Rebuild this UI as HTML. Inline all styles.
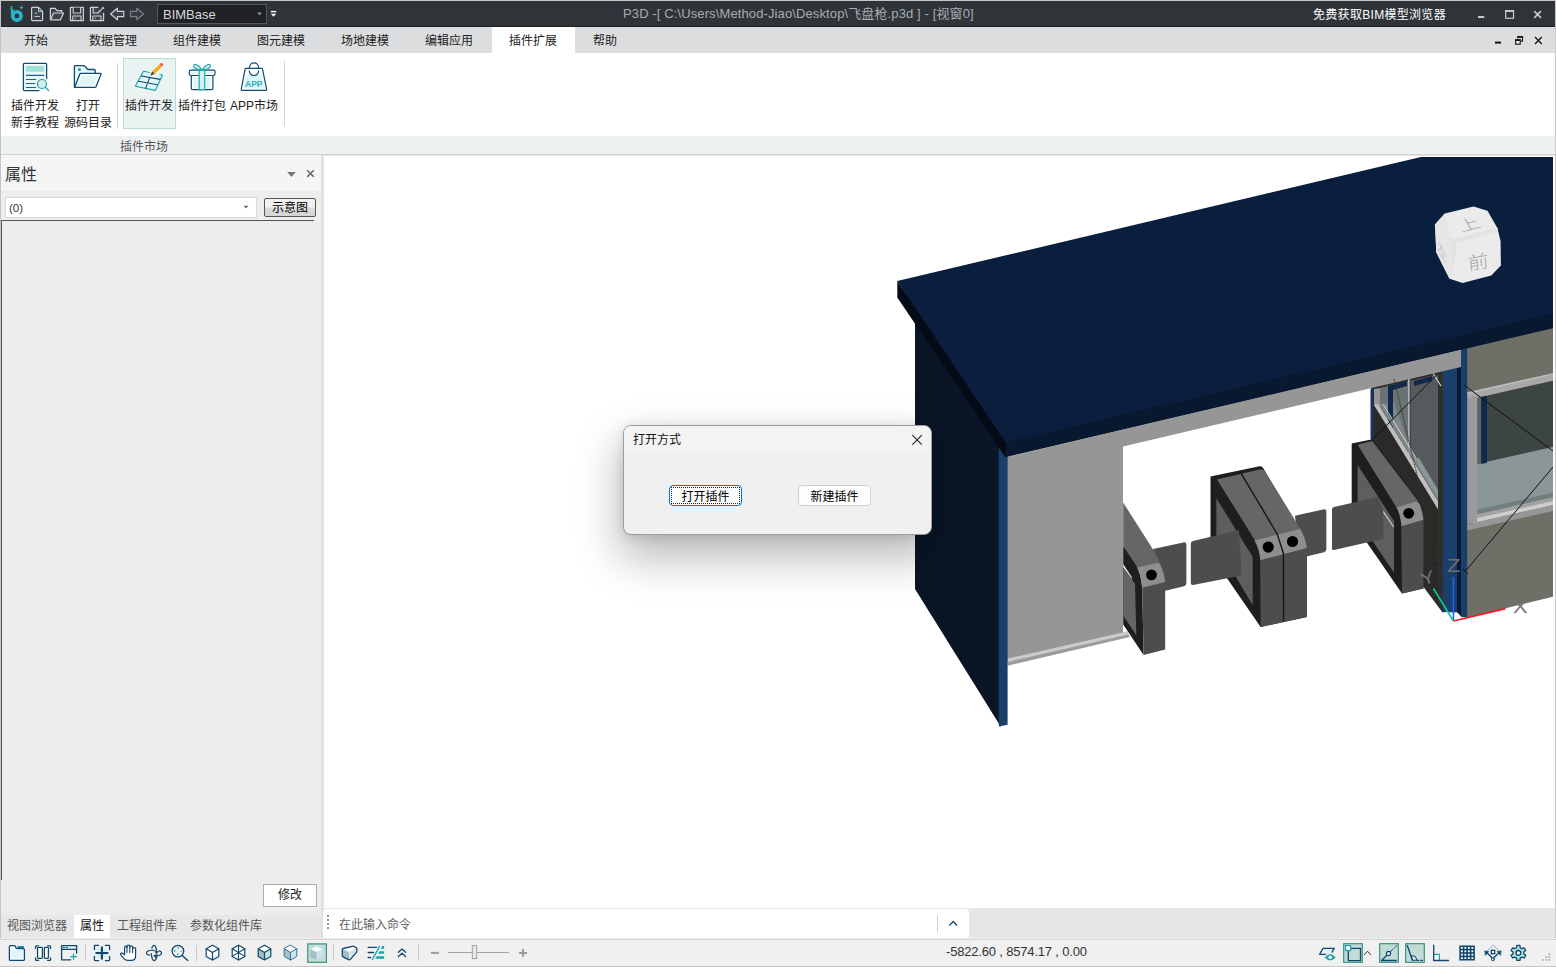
<!DOCTYPE html>
<html lang="zh-CN">
<head>
<meta charset="utf-8">
<title>P3D</title>
<style>
*{box-sizing:border-box;margin:0;padding:0}
html,body{width:1556px;height:967px;overflow:hidden;background:#e6e6e6}
body{font-family:"Liberation Sans","Noto Sans CJK SC",sans-serif;font-size:12px;color:#333;position:relative}
.abs{position:absolute}
svg{position:absolute;overflow:visible}
/* title bar */
#titlebar{left:0;top:0;width:1556px;height:27px;background:#2f3439;border-top:1px solid #c6c6c6;border-bottom:1px solid #1f2327}
#title{left:623px;top:6px;color:#a9acb0;font-size:13px;line-height:16px;letter-spacing:.115px;white-space:nowrap}
#bimtxt{left:1313px;top:7px;color:#fff;font-size:12px;line-height:16px;white-space:nowrap;letter-spacing:.3px}
#combo{left:157px;top:4px;width:110px;height:20px;background:#1f2124;border:1px solid #55595e;color:#d8dade;font-size:13px;line-height:20px;padding-left:5px}
/* tab bar */
#tabbar{left:0;top:27px;width:1556px;height:26px;background:#dcdddf}
.tab{position:absolute;top:0;height:26px;line-height:27px;font-size:12px;color:#222;white-space:nowrap}
#tabactive{left:492px;top:27px;width:83px;height:26px;background:#fff}
/* ribbon */
#ribbon{left:0;top:53px;width:1556px;height:83px;background:#fff}
#grpbar{left:0;top:136px;width:1556px;height:19px;background:#eef1f2;border-bottom:1px solid #cfd1d2}
.rlabel{position:absolute;font-size:12px;line-height:17px;color:#222;text-align:center;white-space:nowrap}
.vsep{position:absolute;width:1px;background:#d4d4d4}
/* left panel */
#lpanel{left:0;top:155px;width:321px;height:783px;background:#ededed}
#lhead{left:0;top:155px;width:321px;height:36px;background:#f5f5f5}
#viewport{left:324px;top:157px;width:1229px;height:751px;background:#fff;overflow:hidden}
#cmdbar{left:323px;top:909px;width:646px;height:29.6px;background:#fff;border-radius:3.5px}
#status{left:0;top:938px;width:1556px;height:29px;background:#f0f0f0;border-top:1px solid #ededed;border-bottom:1px solid #c6c6c6;box-shadow:inset 0 1px 0 #d4d4d4}
.btab{position:absolute;top:915px;height:23px;line-height:22px;font-size:12px;color:#555;white-space:nowrap}
</style>
</head>
<body>
<!-- TITLE BAR -->
<div id="titlebar" class="abs"></div>
<div id="combo" class="abs">BIMBase</div>
<div id="title" class="abs">P3D -[ C:\Users\Method-Jiao\Desktop\飞盘枪.p3d ] - [视窗0]</div>
<div id="bimtxt" class="abs">免费获取BIM模型浏览器</div>

<!-- TAB BAR -->
<div id="tabbar" class="abs"></div>
<div id="tabactive" class="abs"></div>
<div class="tab" style="left:24px;top:28px">开始</div>
<div class="tab" style="left:89px;top:28px">数据管理</div>
<div class="tab" style="left:173px;top:28px">组件建模</div>
<div class="tab" style="left:257px;top:28px">图元建模</div>
<div class="tab" style="left:341px;top:28px">场地建模</div>
<div class="tab" style="left:425px;top:28px">编辑应用</div>
<div class="tab" style="left:509px;top:28px">插件扩展</div>
<div class="tab" style="left:593px;top:28px">帮助</div>

<!-- RIBBON -->
<div id="ribbon" class="abs"></div>
<div id="grpbar" class="abs"></div>
<div class="abs" style="left:123px;top:58px;width:53px;height:71px;background:#eaf3f2;border:1px solid #b9dcd6"></div>
<div class="vsep" style="left:117px;top:63px;height:65.5px"></div>
<div class="vsep" style="left:284px;top:61px;height:65px"></div>
<div class="rlabel" style="left:5px;top:98px;width:60px">插件开发<br>新手教程</div>
<div class="rlabel" style="left:58px;top:98px;width:60px">打开<br>源码目录</div>
<div class="rlabel" style="left:119px;top:98px;width:60px">插件开发</div>
<div class="rlabel" style="left:172px;top:98px;width:60px">插件打包</div>
<div class="rlabel" style="left:224px;top:98px;width:60px">APP市场</div>
<div class="rlabel" style="left:114px;top:139px;width:60px;color:#555">插件市场</div>

<!-- LEFT PANEL -->
<div id="lpanel" class="abs"></div>
<div id="lhead" class="abs"></div>
<div class="abs" style="left:5px;top:164px;font-size:16px;line-height:22px;color:#333">属性</div>
<div class="abs" style="left:5px;top:197px;width:252px;height:21px;background:#fff;border:1px solid #d9d9d9;font-size:11.5px;line-height:20px;padding-left:3px;color:#333">(0)</div>
<div class="abs" style="left:264px;top:198px;width:52px;height:19px;background:linear-gradient(#f2f2f2 0,#efefef 48%,#dcdcdc 52%,#d4d4d4 100%);border:1px solid #555;border-radius:2px;font-size:12px;line-height:19px;text-align:center;color:#000">示意图</div>
<div class="abs" style="left:1px;top:220px;width:313px;height:660px;border-top:1px solid #555;border-left:1px solid #555"></div>
<div class="abs" style="left:263px;top:884px;width:54px;height:23px;background:#fff;border:1px solid #adadad;font-size:12px;line-height:21px;text-align:center;color:#222">修改</div>
<div class="abs" style="left:0;top:915px;width:321px;height:23px;background:#e7e7e7"></div>
<div class="abs" style="left:74px;top:915px;width:36px;height:23px;background:#fff"></div>
<div class="btab" style="left:7px">视图浏览器</div>
<div class="btab" style="left:80px;color:#111">属性</div>
<div class="btab" style="left:117px">工程组件库</div>
<div class="btab" style="left:190px">参数化组件库</div>

<div class="abs" style="left:321px;top:155px;width:2.5px;height:783px;background:#e1e1e1"></div>
<!-- VIEWPORT -->
<div id="viewport" class="abs">
<!--SCENE_START--><svg width="1556" height="967" viewBox="0 0 1556 967" style="left:-324px;top:-157px" shape-rendering="geometricPrecision">
<!-- kiosk front wall (right) -->
<polygon points="1466,340 1556,318 1556,596 1466,618" fill="#6e7068"/>
<!-- window top frame -->
<polygon points="1467.0,392.6 1556.0,372.5 1556.0,380.3 1467.0,400.4" fill="#a8a8a8"/>
<polygon points="1467.0,392.6 1556.0,372.5 1556.0,373.9 1467.0,394.0" fill="#bcbcbc"/>
<polygon points="1477.0,397.9 1556.0,380.1 1556.0,446.4 1477.0,464.2" fill="#3c4444"/>
<polygon points="1477.0,464.0 1556.0,446.2 1556.0,492.3 1477.0,510.1" fill="#8b9699"/>
<polygon points="1481.0,397.0 1487.0,395.7 1487.0,462.7 1481.0,464.0" fill="#0f2a4d"/>
<polygon points="1477.0,397.9 1481.2,397.0 1481.2,463.4 1477.0,464.3" fill="#5a6468"/>
<polygon points="1477.0,509.9 1556.0,492.1 1556.0,496.7 1477.0,514.5" fill="#737e81"/>
<polygon points="1467.0,516.6 1556.0,496.5 1556.0,500.5 1467.0,520.6" fill="#a2a2a2"/>
<polygon points="1472.6,519.1 1556.0,500.3 1556.0,504.5 1472.6,523.3" fill="#cdcdcd"/>
<polygon points="1467.0,524.4 1556.0,504.3 1556.0,510.3 1467.0,530.4" fill="#969696"/>
<polygon points="1467.0,398.0 1477.2,395.7 1477.2,521.7 1467.0,524.0" fill="#9a9a9a"/>
<!-- kiosk side wall -->
<polygon points="1371,380 1443,365 1443,613 1425,589 1371,509" fill="#2a2a28"/>
<!-- side window glass -->
<polygon points="1380,388 1438,374 1438,509 1380,413" fill="#555b5c"/>
<polygon points="1380,388 1408,381 1408,458 1380,413" fill="#6a7275"/>
<polygon points="1384,404 1394,402 1407,440 1407,447" fill="#7d8689"/>
<!-- blue top pieces -->
<polygon points="1388,386 1407,381 1407,386 1393,390 1393,432 1388,424" fill="#10294a"/>
<polygon points="1414,381 1432,376 1432,381 1414,386" fill="#10294a"/>
<!-- verticals -->
<polygon points="1374,389 1380,388 1380,413 1374,405" fill="#969696"/>
<rect x="1370.5" y="389" width="3" height="50" fill="#16365e"/>
<rect x="1408" y="379" width="1.6" height="80" fill="#b0b0b0"/>
<rect x="1410" y="379" width="1.2" height="82" fill="#44494a"/>
<!-- diagonal sill -->
<polygon points="1374,405 1378,404 1439,503 1439,511" fill="#bfbfbf"/>
<polygon points="1379,404 1382,404 1439,496 1439,502" fill="#80888a"/>
<line x1="1383" y1="404" x2="1438" y2="494" stroke="#d8d8d8" stroke-width="1"/>
<polygon points="1414,458 1419,458 1438,490 1438,498" fill="#8a9598"/>
<!-- dark column -->
<polygon points="1438,370 1444,368 1444,613 1438,606" fill="#2e2e2d"/>
<line x1="1433" y1="373" x2="1441" y2="386" stroke="#d0d0d0" stroke-width="1.2"/>

<!-- blue pillar -->
<polygon points="1442.8,360 1457.5,357 1457.5,612.5 1442.8,612" fill="#1a3f6b"/>
<polygon points="1457,357 1461.5,356 1461.5,617 1457,612" fill="#0a1a33"/>
<polygon points="1461,340 1467.2,340 1467.2,617.5 1461,617" fill="#1a3f6b"/>

<!-- beam under roof -->
<polygon points="1007,457 1461,350 1461,367 1123,446.5 1007,474" fill="#969696"/>
<!-- gray wall left -->
<polygon points="1007,460 1123,440 1123,634 1007,660" fill="#969696"/>
<polygon points="1007.5,658.6 1127,631.6 1129.8,637 1007.5,665.8" fill="#9c9c9c"/>
<polygon points="1007.5,658.6 1127,631.6 1128.2,634.4 1007.5,662" fill="#cbcbcb"/>

<!-- left wall -->
<polygon points="915,300 1001,440 1001,727 915,589" fill="#0a1626"/>
<polygon points="998.8,440 1007.6,440 1007.6,724.8 998.8,726.4" fill="#1a3f6b"/>

<!-- roof -->
<polygon points="897.3,281 1556,125 1556,320 1005.6,450" fill="#0a1e3d"/>
<polygon points="1005.6,442.5 1556,313 1556,327.5 1005.6,457.2" fill="#07182f"/>
<polygon points="897.3,281 1005.6,442.5 1005.6,457.8 897.3,297.5" fill="#040b16"/>
<!-- ===== turnstile 1 ===== -->
<path d="M1153,549 L1183.5,542.4 Q1186.4,542 1186.4,545 L1186.4,583 Q1186.4,585.6 1184,586.2 L1160,592 Z" fill="#4d4d4d"/>
<polygon points="1123.2,502.6 1154,551 1160.4,563.4 1138,569 1123.2,545.8" fill="#666"/>
<path d="M1123.2,545.8 L1135,563.5 Q1141,572 1142.2,587.7 L1143.6,654.9 L1123.2,624.4 Z" fill="#1e1e1e"/>
<polygon points="1123.2,566.4 1135,584.1 1136.3,635.2 1123.2,615.6" fill="#646464"/>
<polygon points="1123.2,564 1132,577.6 1132,579 1123.2,567" fill="#ececec"/>
<path d="M1137.3,567.4 L1156,563.3 Q1159,562.5 1160.5,565 Q1164,572 1165.2,582.2 L1142.2,587.7 Q1141,575 1137.3,567.4 Z" fill="#8e8e8e"/>
<circle cx="1151.5" cy="574.9" r="5.4" fill="#000"/>
<polygon points="1142.2,587.4 1165.2,581.9 1165.2,649.4 1143.6,654.9" fill="#4d4d4d"/>

<!-- ===== middle turnstile ===== -->
<path d="M1295,515.8 L1324,509.3 Q1326.4,509 1326.4,511.5 L1326.4,549 Q1326.4,551.6 1324,552.3 L1300,558 Z" fill="#4d4d4d"/>
<path d="M1210.5,476.5 L1259.5,466.2 Q1262.5,465.8 1264,469.6 L1298.5,528 L1305.5,546.5 L1305.5,617.3 L1260.6,626.9 L1210.5,554.2 Z" fill="#1e1e1e"/>
<path d="M1217,479.5 L1259.6,469.4 Q1263,468.8 1265,471.4 L1300.6,529.2 L1301,531 L1256,542 Z" fill="#666"/>
<path d="M1254.4,540.4 L1300.2,529 Q1305.2,537 1307,548.4 L1260.4,561 Q1259.5,549 1254.4,540.4 Z" fill="#8e8e8e"/>
<polygon points="1260.2,560.2 1307,548 1307,617.1 1260.6,626.9" fill="#4d4d4d"/>
<polygon points="1216.4,498.2 1252.7,557.1 1252.7,605.3 1216.4,544.3" fill="#5e5e5e"/>
<polyline points="1240,471.6 1277.2,534 1283.4,553.2 1283.6,621.6" fill="none" stroke="#161616" stroke-width="1.4"/>
<circle cx="1268.2" cy="547.1" r="5.6" fill="#000"/>
<circle cx="1292.5" cy="541.5" r="5.6" fill="#000"/>
<path d="M1193,541 L1239,530 L1241.5,575.5 L1193,585 Q1190.8,585.3 1190.8,583 L1190.8,543.5 Q1190.8,541.5 1193,541 Z" fill="#4d4d4d"/>

<!-- ===== turnstile 3 ===== -->
<path d="M1351.7,443.4 L1372.4,439.3 L1418.2,499.8 L1423.5,520 L1423.5,588.6 L1402,593.4 L1351.7,520.5 Z" fill="#1e1e1e"/>
<polygon points="1357.6,444.8 1372.2,441 1418.4,501.4 1397.2,508.6" fill="#666"/>
<path d="M1396.5,507.5 L1414.5,502 Q1418,501 1419.5,504 Q1422.5,511 1423.5,520 L1401.5,526.5 Q1400.5,515 1396.5,507.5 Z" fill="#8e8e8e"/>
<circle cx="1408.7" cy="513.3" r="5.4" fill="#000"/>
<polygon points="1401.2,526.6 1423.5,520 1423.5,588.6 1402,593.4" fill="#4d4d4d"/>
<polygon points="1357.6,464.9 1394,521.3 1394,572.4 1357.6,519" fill="#5e5e5e"/>
<polygon points="1383.2,510.4 1393.6,526 1393.6,527.8 1383.2,512.4" fill="#d8d8d8"/>
<path d="M1334,507 L1377.8,497.1 L1383.2,510.6 L1383.2,538.8 L1334,550 Q1332,550.4 1332,548.5 L1332,509.4 Q1332,507.5 1334,507 Z" fill="#4d4d4d"/>

<!-- helper lines -->
<line x1="1371.5" y1="440.5" x2="1438" y2="373.5" stroke="#111" stroke-width="1"/>
<line x1="1394" y1="379" x2="1438.5" y2="564" stroke="#3a2f1c" stroke-width="1" stroke-dasharray="1.5,1"/>
<line x1="1434" y1="564.5" x2="1442" y2="563.5" stroke="#222" stroke-width="1"/>
<line x1="1464" y1="385" x2="1553" y2="451" stroke="#111" stroke-width="1"/>
<line x1="1553" y1="467" x2="1465.5" y2="571" stroke="#111" stroke-width="1"/>
<line x1="1463" y1="569" x2="1468" y2="574" stroke="#111" stroke-width="1"/>

<!-- axes -->
<line x1="1453.4" y1="621" x2="1453.4" y2="577" stroke="#1464ff" stroke-width="1.6"/>
<line x1="1453.4" y1="621" x2="1505.5" y2="608.6" stroke="#ff1420" stroke-width="1.6"/>
<line x1="1453.4" y1="621" x2="1433.5" y2="588.5" stroke="#10c49a" stroke-width="1.6"/>
<text transform="translate(1453.8,571.6) scale(1.25,1)" text-anchor="middle" font-family="Liberation Sans, sans-serif" font-size="17.5" fill="#707070">Z</text>
<text transform="translate(1429.4,583.5) rotate(-18) scale(1.2,1)" text-anchor="middle" font-family="Liberation Sans, sans-serif" font-size="17.5" fill="#707070">Y</text>
<text transform="translate(1520.2,613) scale(1.25,1)" text-anchor="middle" font-family="Liberation Sans, sans-serif" font-size="17.5" fill="#707070">X</text>

<!-- view cube -->
<polygon points="1473.5,206.6 1487.5,210.8 1497.5,228.3 1500.6,241.5 1500.9,265.5 1491.3,275.6 1462.6,283 1449.5,278.7 1436.3,252.3 1435,224.4 1444.8,213.6" fill="#ebebeb"/>
<polygon points="1435,224.4 1444.8,213.6 1451,238 1453.4,268 1449.5,278.7 1436.3,252.3" fill="#e6e6e6"/>
<polygon points="1451,238 1456,243 1497.5,232 1497.5,228.3 1489,230 1458,238" fill="#e3e3e3"/>
<polygon points="1451,238 1456,243 1455,262 1453.4,268" fill="#e2e2e2"/>
<text transform="matrix(0.966,-0.259,0.37,0.62,1469.2,224.6)" text-anchor="middle" dy=".36em" font-family="'Noto Sans CJK SC', sans-serif" font-weight="300" font-size="21" fill="#a6a6a6">上</text>
<text transform="matrix(0.985,-0.174,0.08,0.84,1478.1,262)" text-anchor="middle" dy=".36em" font-family="'Noto Sans CJK SC', sans-serif" font-weight="300" font-size="21" fill="#a6a6a6">前</text>
<text transform="matrix(0.47,0.70,-0.03,0.64,1442.1,252)" text-anchor="middle" dy=".36em" font-family="'Noto Sans CJK SC', sans-serif" font-weight="300" font-size="20" fill="#b0b0b0">左</text>
</svg>
<!--SCENE_END-->
</div>

<div class="abs" style="left:323px;top:156px;width:1231.5px;height:1px;background:#fff"></div>
<div class="abs" style="left:1553px;top:156px;width:1.5px;height:752px;background:#fff"></div>
<div class="abs" style="left:0;top:0;width:1px;height:967px;background:#c4c4c4"></div>
<div class="abs" style="left:1554.5px;top:0;width:1.5px;height:967px;background:#c8c8c8"></div>
<!-- COMMAND BAR -->
<div id="cmdbar" class="abs"></div>
<div class="abs" style="left:339px;top:916.5px;font-size:12px;line-height:17px;color:#626262">在此输入命令</div>
<div class="abs" style="left:937px;top:915px;width:1px;height:17px;background:#d0d0d0"></div>

<!-- STATUS BAR -->
<div id="status" class="abs"></div>
<div class="abs" style="left:946px;top:943px;font-size:13px;line-height:17px;color:#333;white-space:nowrap;letter-spacing:-.18px">-5822.60 , 8574.17 , 0.00</div>

<!--ICONS_START--><svg width="1556" height="967" viewBox="0 0 1556 967" style="left:0;top:0;pointer-events:none" fill="none">
<!-- ===== title bar icons ===== -->
<g id="logo">
<circle cx="16.9" cy="15.9" r="4.2" stroke="#2ab3c8" stroke-width="3.6"/>
<path d="M12.4,10 Q11.6,13 12.6,16.4" stroke="#2ab3c8" stroke-width="2.6" stroke-linecap="round"/>
<path d="M21.4,5.8 L21.4,9.2 M19.7,7.5 L23.1,7.5" stroke="#2ab3c8" stroke-width="1.1"/>
<path d="M10.2,6.8 L12.4,6.8 L10.4,9 L12.6,9" stroke="#2ab3c8" stroke-width=".9"/>
</g>
<g stroke="#cdd0d4" stroke-width="1.2" stroke-linejoin="round" fill="#3b444d">
<path d="M32.4,7.4 L38.6,7.4 L42.6,11.4 L42.6,19.8 Q42.6,20.6 41.8,20.6 L32.4,20.6 Q31.6,20.6 31.6,19.8 L31.6,8.2 Q31.6,7.4 32.4,7.4 Z"/>
<path d="M38.6,7.6 L38.6,11.4 L42.4,11.4" stroke-width="1" fill="none"/>
<path d="M34.7,13.2 L37.1,13.2 M34.4,16.4 L40,16.4" stroke-width="1" fill="none"/>
<path d="M50.4,19.4 L50.4,8.4 L55.2,8.4 L57,10.6 L61.8,10.6 L61.8,12.8"/>
<path d="M50.6,19.8 L53.6,13 L63.6,13 L60.4,19.8 Z"/>
<path d="M70.4,7.4 L83.4,7.4 L83.4,20.6 L70.4,20.6 Z"/>
<path d="M73.2,7.6 L73.2,13 L80.6,13 L80.6,7.6" stroke-width="1.1" fill="#2f3439"/>
<path d="M72.8,20.4 L72.8,16 L81,16 L81,20.4" stroke-width="1.1" fill="none"/>
<path d="M75.2,18.4 L76,18.4" stroke-width="1.1"/>
<path d="M98.4,7.4 L90.4,7.4 L90.4,20.6 L103.6,20.6 L103.6,12.8"/>
<path d="M93.2,7.6 L93.2,13 L98,13" stroke-width="1.1" fill="none"/>
<path d="M92.8,20.4 L92.8,16 L101,16 L101,20.4" stroke-width="1.1" fill="none"/>
<path d="M95.2,18.4 L96,18.4" stroke-width="1.1"/>
<path d="M103.4,7.6 L97.6,13.2 M102.4,7 L104,8.6" stroke-width="1.3" fill="none"/>
</g>
<path d="M110.6,14 L117.4,8.2 L117.4,11.4 L123.8,11.4 L123.8,16.6 L117.4,16.6 L117.4,19.8 Z" stroke="#cdd0d4" stroke-width="1.2" stroke-linejoin="round" fill="#3b444d"/>
<path d="M143.6,14 L136.8,8.2 L136.8,11.4 L130.4,11.4 L130.4,16.6 L136.8,16.6 L136.8,19.8 Z" stroke="#7a7f85" stroke-width="1.2" stroke-linejoin="round" fill="#363d45"/>
<path d="M257,12.6 L262,12.6 L259.5,15.6 Z" fill="#8b8f94"/>
<path d="M270.8,11.6 L276.2,11.6" stroke="#fff" stroke-width="1.4"/>
<path d="M270.8,13.8 L276.2,13.8 L273.5,16.8 Z" fill="#fff"/>
<!-- window controls -->
<path d="M1478,17 L1484.2,17" stroke="#c9cbce" stroke-width="2"/>
<rect x="1505.7" y="10.8" width="7.8" height="7.5" stroke="#c9cbce" stroke-width="1.2"/><path d="M1505.1,11 L1514.1,11" stroke="#c9cbce" stroke-width="1.8"/>
<path d="M1534.2,11.1 L1541,17.9 M1541,11.1 L1534.2,17.9" stroke="#c9cbce" stroke-width="1.5"/>
<path d="M1495,42.6 L1501,42.6" stroke="#111" stroke-width="2"/>
<path d="M1517.9,38.6 L1517.9,36.8 L1522.5,36.8 L1522.5,41.2 L1521,41.2" stroke="#111" stroke-width="1.1"/><path d="M1517.3,36.9 L1523.1,36.9" stroke="#111" stroke-width="1.7"/><rect x="1515.7" y="40" width="4.5" height="4.2" fill="#eceded" stroke="#111" stroke-width="1.1"/><path d="M1515.1,40.1 L1520.8,40.1" stroke="#111" stroke-width="1.7"/>
<path d="M1535,37 L1541.8,44 M1541.8,37 L1535,44" stroke="#111" stroke-width="1.3"/>
<!-- left panel header icons -->
<path d="M287.2,172 L295.8,172 L291.5,177 Z" fill="#777"/>
<path d="M307.2,170.2 L313.8,176.9 M313.8,170.2 L307.2,176.9" stroke="#6a6a6a" stroke-width="1.5"/>
<path d="M243.6,205.8 L248.4,205.8 L246,208.6 Z" fill="#666"/>
<!-- command bar -->
<path d="M328,915.1 v1.9 M328,919.1 v1.9 M328,923.1 v1.9 M328,927.2 v1.9" stroke="#8e8e8e" stroke-width="1.9"/>
<path d="M949.4,925.4 L953.2,921.4 L957,925.4" stroke="#1d4a75" stroke-width="1.4"/>

<!-- ===== ribbon icons ===== -->
<g stroke-linejoin="round" stroke-linecap="round">
<!-- 1: doc w/ magnifier -->
<rect x="24.6" y="64.8" width="20.8" height="24.6" fill="#e6f8f8" stroke="none"/>
<path d="M39,90.6 L24.4,90.6 Q23.4,90.6 23.4,89.6 L23.4,64.4 Q23.4,63.4 24.4,63.4 L45.6,63.4 Q46.6,63.4 46.6,64.4 L46.6,78.4" stroke="#0f4a73" stroke-width="1.3" fill="none"/>
<rect x="26.1" y="66" width="18" height="5.7" fill="#a0e0d8"/>
<path d="M26.4,75.4 L43.8,75.4 M26.4,79.5 L35.8,79.5 M26.4,83.5 L34.8,83.5 M26.4,87.5 L35.8,87.5" stroke="#1d5f8a" stroke-width="1.1"/>
<circle cx="42" cy="84" r="4.5" fill="#d3ecec" stroke="#1aa3a8" stroke-width="1.2"/>
<path d="M45.4,87.4 L48.6,90.5" stroke="#1aa3a8" stroke-width="1.3"/>
<!-- 2: folder -->
<path d="M74.4,86.8 L74.4,66.4 Q74.4,65.6 75.2,65.6 L83.6,65.6 Q84.2,65.6 84.6,66 L87.6,69.2 Q87.9,69.5 88.4,69.5 L94.2,69.5 Q95.1,69.5 95.1,70.4 L95.3,73.2" stroke="#0f4a73" stroke-width="1.3" fill="#e6f8f8"/>
<path d="M74.6,87.4 L79.9,73.9 Q80.2,73.4 80.8,73.4 L100.4,73.4 Q101.4,73.4 101,74.3 L96,86.8 Q95.7,87.4 95,87.4 Z" stroke="#0f4a73" stroke-width="1.3" fill="#fff"/>
<path d="M81.6,76 L97.6,76 L94,85.4 L78,85.4 Z" fill="#dff6f8" stroke="none"/>
<circle cx="79.5" cy="69.5" r="1.5" fill="#1aa3a8"/>
<!-- 3: grid + pencil -->
<path d="M143.5,71.2 L162.5,75 L155.3,90.4 L135.3,86.3 Z" fill="#e0f5f7" stroke="#1aa3a8" stroke-width="1.1"/>
<path d="M141.5,76 L160,79.4 M138.4,81.2 L157.4,84.8 M149.7,77.6 L145.6,88.4" stroke="#11466d" stroke-width="1.1"/>
<path d="M149.6,71 L158.6,74" stroke="#eaf3f2" stroke-width="2.4"/>
<path d="M152.2,71.6 L159.6,64.2 L162,66.6 L154.6,74 Z" fill="#f7a600" stroke="none"/>
<path d="M153.4,72.8 L160.8,65.4" stroke="#fbc44a" stroke-width=".9"/>
<path d="M159.6,64.2 L160.4,63.4 Q161.6,62.6 162.6,63.6 Q163.6,64.6 162.8,65.8 L162,66.6 Z" fill="#f04860"/>
<path d="M152.2,71.6 L150.2,75.8 L154.6,74 Z" fill="#5a3a2a"/>
<!-- 4: gift -->
<path d="M191.3,75.5 L212.9,75.5 L212.9,88.2 Q212.9,89.7 211.4,89.7 L192.8,89.7 Q191.3,89.7 191.3,88.2 Z" fill="#fff" stroke="#0f4a73" stroke-width="1.2"/>
<rect x="193.4" y="77.4" width="17.4" height="10.4" fill="#e0f5f7"/>
<rect x="189.3" y="70.2" width="25.7" height="5.3" rx="1.5" fill="#fff" stroke="#0f4a73" stroke-width="1.2"/>
<rect x="191.2" y="71.8" width="22" height="2.4" fill="#e0f5f7"/>
<rect x="199.2" y="70.2" width="5.5" height="19.5" fill="#d3f0f0" stroke="#1aa3a8" stroke-width="1.1"/>
<path d="M201.6,69.6 C198.4,64 193.6,63.2 193.6,66 C193.6,68.6 198,69.4 201.6,69.6 M202.4,69.6 C205.6,64 210.4,63.2 210.4,66 C210.4,68.6 206,69.4 202.4,69.6" stroke="#1aa3a8" stroke-width="1.1" fill="#e0f5f7"/>
<!-- 5: APP bag -->
<path d="M246.2,68.3 L261.4,68.3 Q262.3,68.3 262.5,69.2 L266.6,89.2 Q266.8,90.4 265.6,90.4 L242.3,90.4 Q241.1,90.4 241.3,89.2 L245.1,69.2 Q245.3,68.3 246.2,68.3 Z" fill="#fff" stroke="#0f4a73" stroke-width="1.2"/>
<path d="M246,75 L262,75 L264.4,88.6 L243.4,88.6 Z" fill="#e0f5f7"/>
<path d="M249.4,68.2 C249.4,61.2 258.7,61.2 258.7,68.2" stroke="#0f4a73" stroke-width="1.2" fill="none"/>
<path d="M249.2,70.9 C250,77 257.9,77 258.7,70.9" stroke="#0f4a73" stroke-width="1.1" fill="#fff"/>
</g>
<text x="245.1" y="86.8" font-family="Liberation Sans, sans-serif" font-weight="bold" font-size="9.6" fill="#2ab0b6" stroke="none" textLength="17.2" lengthAdjust="spacingAndGlyphs">APP</text>
<!-- ===== bottom toolbar icons ===== -->
<g stroke="#11466d" stroke-width="1.3" stroke-linejoin="round" stroke-linecap="round" fill="none">
<!-- 1 folder/page -->
<rect x="17.6" y="946" width="6.4" height="2.6" fill="#1aa3a8" stroke="none"/>
<path d="M10.4,945.6 L14.6,945.6 Q15.4,945.6 15.5,946.6 Q15.7,948.6 17.4,948.6 L23.2,948.6 Q24.4,948.6 24.4,949.8 L24.4,959.2 Q24.4,960.4 23.2,960.4 L10.4,960.4 Q9.4,960.4 9.4,959.2 L9.4,946.8 Q9.4,945.6 10.4,945.6 Z" fill="#fff"/>
<rect x="11.4" y="950.2" width="11.2" height="8.2" fill="#dff4f6" stroke="none"/>
<path d="M18.6,947.2 L19.6,947.2 M21.4,947.2 L22.4,947.2" stroke-width=".9"/>
<!-- 2 brackets + bars -->
<path d="M38.6,945.8 L36.4,945.8 Q35.6,945.8 35.6,946.8 L35.6,948.4 M35.6,957.8 L35.6,959.4 Q35.6,960.4 36.4,960.4 L38.6,960.4 M47.6,945.8 L49.8,945.8 Q50.6,945.8 50.6,946.8 L50.6,948.4 M50.6,957.8 L50.6,959.4 Q50.6,960.4 49.8,960.4 L47.6,960.4"/>
<rect x="37.6" y="947.4" width="4.8" height="11" rx=".8" fill="#fff"/>
<rect x="44.4" y="947.4" width="4" height="11" rx=".8" fill="#fff"/>
<path d="M38.4,948.6 L41.6,948.6 M45.2,948.6 L47.6,948.6" stroke="#dff4f6" stroke-width="1"/>
<!-- 3 window + plus -->
<rect x="62.2" y="946.2" width="14" height="2.8" fill="#dff4f6" stroke="none"/>
<path d="M70.6,959.8 L61.6,959.8 L61.6,945.6 L76.6,945.6 L76.6,953.2"/>
<path d="M61.6,949.4 L76.6,949.4" stroke-width="1.1"/>
<path d="M63.4,947.5 L64.4,947.5 M66.2,947.5 L67.4,947.5" stroke-width="1"/>
<path d="M73.5,953.4 L73.5,959.8 M70.2,956.6 L76.8,956.6" stroke="#1aa3a8" stroke-width="1.2" stroke-linecap="butt"/>
<!-- 4 [+] -->
<circle cx="101.9" cy="953" r="5.4" fill="#d2eef0" stroke="none"/>
<path d="M98.6,945.4 L95.2,945.4 Q94.4,945.4 94.4,946.2 L94.4,949.6 M94.4,956.4 L94.4,959.8 Q94.4,960.6 95.2,960.6 L98.6,960.6 M105.4,945.4 L108.8,945.4 Q109.6,945.4 109.6,946.2 L109.6,949.6 M109.6,956.4 L109.6,959.8 Q109.6,960.6 108.8,960.6 L105.4,960.6"/>
<path d="M101.9,947.4 L101.9,958.7 M96.3,953 L107.6,953" stroke-width="2.1"/>
<!-- 5 hand -->
<path d="M120.6,954.6 Q120,953.6 121.2,953.2 Q122.4,952.9 123.4,953.8 L124.6,954.9 L124.6,947.4 Q124.6,946.2 125.8,946.2 Q127,946.2 127,947.4 L127,946.4 Q127,945.2 128.4,945.2 Q129.8,945.2 129.8,946.4 L129.8,946.9 Q129.8,945.8 131.2,945.8 Q132.6,945.8 132.6,947 L132.6,948.6 Q132.6,947.6 134,947.6 Q135.6,947.6 135.6,949 L135.6,956 Q135.6,960.4 131.4,960.4 L127.6,960.4 Q125.6,960.4 124.4,959.2 Z" fill="#fff" stroke-width="1.2"/>
<path d="M127,947.4 L127,952.6 M129.8,946.8 L129.8,952.6 M132.6,948 L132.6,952.6" stroke-width="1.1"/>
<!-- 6 orbit -->
<path d="M154,950.4 C150,949.8 146.4,951 146.4,952.8 C146.4,954.2 148.2,955 149.4,955.2" stroke-width="1.2"/>
<path d="M151.2,953.6 C151.6,958 153,961 154.4,960.6 C155.6,960.2 156.4,958.6 156.6,957.4" stroke-width="1.2"/>
<path d="M154.4,955.8 C158.4,956.2 161.8,954.8 161.6,952.8 C161.4,951.6 160.2,951 159,950.8" stroke-width="1.2"/>
<path d="M156.6,952 C156.4,948 155.2,945 153.8,945.4 C152.6,945.8 152,947 151.8,948.2" stroke-width="1.2"/>
<path d="M155.2,951 L158.4,951.6 L156.4,953.8 Z M157.2,954.6 L153.6,955.8 L156.2,958 Z" fill="#11466d" stroke-width=".6"/>
<!-- 7 zoom -->
<circle cx="177.9" cy="951.1" r="5.8" stroke-width="1.3"/>
<circle cx="177.9" cy="951.1" r="3.2" stroke="#1aa3a8" stroke-width="1.4" stroke-dasharray="1.6,3.43" stroke-dashoffset=".8" stroke-linecap="butt"/>
<path d="M182.2,955.4 L187.8,960.6" stroke-width="1.4"/>
<!-- 8 cube wireframe -->
<path d="M212.5,945.2 L218.8,948.8 L218.8,956.4 L212.5,960.0 L206.2,956.4 L206.2,948.8 Z" fill="#fff" stroke-width="1.2"/>
<path d="M206.2,948.8 L212.5,952.4 L218.8,948.8 M212.5,952.4 L212.5,960.0" stroke-width="1.2"/>
<!-- 9 -->
<path d="M238.5,945.2 L244.8,948.8 L244.8,956.4 L238.5,960.0 L232.2,956.4 L232.2,948.8 Z" fill="#fff" stroke-width="1.2"/>
<path d="M232.2,948.8 L244.8,956.4 M244.8,948.8 L232.2,956.4 M238.5,945.2 L238.5,960.0" stroke-width="1.1"/>
<!-- 10 -->
<path d="M264.5,945.2 L270.8,948.8 L264.5,952.4 L258.2,948.8 Z" fill="#fff" stroke="none"/>
<path d="M258.2,948.8 L264.5,952.4 L264.5,960.0 L258.2,956.4 Z" fill="#a3bcc0" stroke="none"/>
<path d="M264.5,952.4 L270.8,948.8 L270.8,956.4 L264.5,960.0 Z" fill="#c6e3e6" stroke="none"/>
<path d="M264.5,945.2 L270.8,948.8 L270.8,956.4 L264.5,960.0 L258.2,956.4 L258.2,948.8 Z M258.2,948.8 L264.5,952.4 L270.8,948.8 M264.5,952.4 L264.5,960.0" stroke-width="1.2"/>
<!-- 11 -->
<path d="M290.5,945.2 L296.8,948.8 L290.5,952.4 L284.2,948.8 Z" fill="#fff" stroke="none"/>
<path d="M284.2,948.8 L290.5,952.4 L290.5,960.0 L284.2,956.4 Z" fill="#a8c0c6" stroke="none"/>
<path d="M290.5,952.4 L296.8,948.8 L296.8,956.4 L290.5,960.0 Z" fill="#cfe7ea" stroke="none"/>
<path d="M290.5,945.2 L296.8,948.8 L296.8,956.4 L290.5,960.0 L284.2,956.4 L284.2,948.8 Z M284.2,948.8 L290.5,952.4 L296.8,948.8 M290.5,952.4 L290.5,960.0" stroke="#2e74a6" stroke-width="1"/>
<!-- 12 active -->
<rect x="307.8" y="943.9" width="18.6" height="18.4" fill="#c2dbd6" stroke="#2a8c7a" stroke-width="1.1" stroke-linejoin="miter"/>
<path d="M316.6,946.1 L322.9,949.2 L316.6,952.3 L310.3,949.2 Z" fill="#f0fcfb" stroke="none"/>
<path d="M310.3,949.2 L316.6,952.3 L316.6,960.0 L310.3,956.9 Z" fill="#a5bfc2" stroke="none"/>
<path d="M316.6,952.3 L322.9,949.2 L322.9,956.9 L316.6,960.0 Z" fill="#c9e4e6" stroke="none"/>
<!-- 13 wedge -->
<path d="M342.4,949 L353.1,946.4 L356.3,948.1 L348.8,951.9 Z" fill="#fff" stroke="none"/>
<path d="M342.4,949 L348.8,951.9 L349.4,959.7 L342.4,956.5 Z" fill="#a7bec3" stroke="none"/>
<path d="M348.8,951.9 L356.3,948.1 L356.6,951.9 L349.4,959.7 Z" fill="#cfe6ea" stroke="none"/>
<path d="M342.3,949.6 Q342.2,948.7 343.2,948.5 L352.2,946.3 Q353.4,946 354.4,946.6 L356,947.5 Q356.8,948 356.8,949 L356.8,951.2 Q356.8,952 356.2,952.7 L350.4,959.4 Q349.6,960.2 348.6,959.7 L343,956.9 Q342.3,956.5 342.3,955.6 Z" stroke="#14456e" stroke-width="1.3"/>
<!-- 14 lines -->
<path d="M368.2,947.4 L376.4,947.4 M368.2,952.5 L373.6,952.5 M368.2,957.5 L370.6,957.5" stroke="#14456e" stroke-width="1.4"/>
<path d="M379.7,946.1 L372.2,959.9" stroke="#1aa3a8" stroke-width="1.3" stroke-linecap="butt"/>
<path d="M382.3,946.1 L384.1,946.1 L384.1,948.7 L380.9,948.7 Z M379.5,951.2 L384.1,951.2 L384.1,953.7 L378,953.7 Z M376.7,956.2 L384.1,956.2 L384.1,958.8 L375.3,958.8 Z" fill="#1aa3a8" stroke="none"/>
<!-- 15 double chevron -->
<path d="M398.4,952.2 L402,949 L405.6,952.2 M398.4,956.5 L402,953.2 L405.6,956.5" stroke-width="1.3"/>
</g>
<!-- separators -->
<path d="M85.5,945 V961 M196.5,945 V961 M333.5,945 V961 M418.5,945 V961" stroke="#c8c8c8" stroke-width="1"/>
<!-- slider -->
<path d="M430.9,952.9 L439,952.9" stroke="#9c9c9c" stroke-width="2"/>
<path d="M448,952.5 L509,952.5" stroke="#a4a4a4" stroke-width="1"/>
<rect x="472.3" y="945.6" width="4.4" height="13" fill="#e8e8e8" stroke="#a0a0a0" stroke-width="1"/>
<path d="M519,952.9 L527,952.9 M523,949 L523,956.8" stroke="#9c9c9c" stroke-width="2"/>

<!-- ===== right status icons ===== -->
<g stroke="#11466d" stroke-width="1.3" stroke-linejoin="round" stroke-linecap="round" fill="none">
<!-- A plane + eye -->
<path d="M1325.6,954.3 L1319.6,954.3 L1323,948.4 L1334.2,948.4 L1332,952.2" fill="#dff4f6"/>
<path d="M1325.2,957.4 Q1330.2,951.6 1335.2,957.4 Q1330.2,962.8 1325.2,957.4 Z" fill="#1aa3a8" stroke="#1aa3a8" stroke-width=".8"/>
<circle cx="1330.2" cy="957.3" r="1.7" fill="#fff" stroke="none"/>
<!-- B active -->
<rect x="1343.7" y="943.7" width="18.6" height="18.6" fill="#c2dbd6" stroke="#2a8c7a" stroke-width="1.1" stroke-linejoin="miter"/>
<path d="M1350.9,948.4 L1360.5,948.4 L1360.5,960.6 L1348.3,960.6 L1348.3,950.6" stroke-linejoin="miter"/>
<rect x="1345.6" y="945.6" width="5" height="4.9" fill="#fff" stroke="#1aa3a8" stroke-width="1.2" stroke-linejoin="miter"/>
<path d="M1364.4,954.6 L1367.5,951.2 L1370.6,954.6" stroke="#333" stroke-width="1"/>
<!-- C active -->
<rect x="1379.7" y="943.7" width="18.6" height="18.6" fill="#c2dbd6" stroke="#2a8c7a" stroke-width="1.1" stroke-linejoin="miter"/>
<path d="M1396.4,960.5 L1381.6,960.5 L1386.8,955.2" stroke-width="1.3"/>
<path d="M1390.2,951.8 L1392.6,949.6 M1393.8,948.5 L1394.6,947.7 M1395.6,946.7 L1396.8,945.6" stroke-width="1"/>
<circle cx="1388.5" cy="953.5" r="2.1" fill="#dff4f6" stroke-width="1.1"/>
<!-- D active -->
<rect x="1405.7" y="943.7" width="18.6" height="18.6" fill="#c2dbd6" stroke="#2a8c7a" stroke-width="1.1" stroke-linejoin="miter"/>
<path d="M1411.4,956 Q1415.6,954.6 1416.8,960.2 L1412.4,960.2 Z" fill="#dff4f6" stroke-width="1.1"/>
<path d="M1407.3,945.5 L1412.4,960.2" stroke-width="1.3"/>
<path d="M1417.6,960.4 L1418.6,960.4 M1420.6,960.4 L1422.4,960.4" stroke-width="1.2"/>
<!-- E -->
<rect x="1434.2" y="954.4" width="5.2" height="5.6" fill="#fff" stroke="none"/>
<path d="M1434.2,954.3 L1439.4,954.3 L1439.4,960" stroke="#1aa3a8" stroke-width="1.2" stroke-linejoin="miter"/>
<path d="M1433.7,945.2 L1433.7,960.5 L1448.6,960.5" stroke-linejoin="miter"/>
<!-- F grid -->
<rect x="1459.3" y="945.4" width="15.6" height="15.2" rx=".6" fill="#11466d" stroke="none"/>
<rect x="1460.9" y="947.0" width="1.9" height="1.8" fill="#fff" stroke="none"/><rect x="1460.9" y="950.4" width="1.9" height="1.8" fill="#fff" stroke="none"/><rect x="1460.9" y="953.8" width="1.9" height="1.8" fill="#fff" stroke="none"/><rect x="1460.9" y="957.2" width="1.9" height="1.8" fill="#fff" stroke="none"/><rect x="1464.4" y="947.0" width="1.9" height="1.8" fill="#fff" stroke="none"/><rect x="1464.4" y="950.4" width="1.9" height="1.8" fill="#fff" stroke="none"/><rect x="1464.4" y="953.8" width="1.9" height="1.8" fill="#fff" stroke="none"/><rect x="1464.4" y="957.2" width="1.9" height="1.8" fill="#fff" stroke="none"/><rect x="1467.9" y="947.0" width="1.9" height="1.8" fill="#fff" stroke="none"/><rect x="1467.9" y="950.4" width="1.9" height="1.8" fill="#fff" stroke="none"/><rect x="1467.9" y="953.8" width="1.9" height="1.8" fill="#fff" stroke="none"/><rect x="1467.9" y="957.2" width="1.9" height="1.8" fill="#fff" stroke="none"/><rect x="1471.4" y="947.0" width="1.9" height="1.8" fill="#fff" stroke="none"/><rect x="1471.4" y="950.4" width="1.9" height="1.8" fill="#fff" stroke="none"/><rect x="1471.4" y="953.8" width="1.9" height="1.8" fill="#fff" stroke="none"/><rect x="1471.4" y="957.2" width="1.9" height="1.8" fill="#fff" stroke="none"/>
<!-- G diamond arrows -->
<path d="M1487.4,950.5 L1493.3,945.4 L1499.1,950.5" stroke="#7aa5b6" stroke-width=".9"/>
<path d="M1486.6,952.6 L1492.9,958.4 L1499.4,952.6" stroke-width="1.3"/>
<rect x="1491.3" y="950.3" width="3.4" height="3.4" fill="#f0f0f0" stroke-width="1.3" stroke-linejoin="miter"/>
<circle cx="1492.9" cy="959.2" r="1.5" fill="#dff4f6" stroke-width="1"/>
<path d="M1484.9,950.9 L1488.9,951.4 L1485.5,955.3 Z M1501,950.9 L1497,951.4 L1500.4,955.3 Z" fill="#11466d" stroke-width=".5"/>
<!-- H gear -->
<path d="M1516.57,947.71 L1516.87,945.35 L1519.93,945.35 L1520.23,947.71 L1521.97,948.72 L1524.17,947.80 L1525.70,950.45 L1523.81,951.90 L1523.81,953.90 L1525.70,955.35 L1524.17,958.00 L1521.97,957.08 L1520.23,958.09 L1519.93,960.45 L1516.87,960.45 L1516.57,958.09 L1514.83,957.08 L1512.63,958.00 L1511.10,955.35 L1512.99,953.90 L1512.99,951.90 L1511.10,950.45 L1512.63,947.80 L1514.83,948.72 Z" fill="#a9e2de" stroke-width="1.3"/>
<circle cx="1518.4" cy="952.9" r="2.4" fill="#f0f0f0" stroke-width="1.3"/>
</g>
<g fill="#bdbdbd">
<rect x="1548.3" y="953" width="1.9" height="1.9"/><rect x="1545.3" y="956.1" width="1.9" height="1.9"/><rect x="1548.3" y="956.1" width="1.9" height="1.9"/>
<rect x="1542.1" y="959" width="1.9" height="1.9"/><rect x="1545.3" y="959" width="1.9" height="1.9"/><rect x="1548.3" y="959" width="1.9" height="1.9"/>
</g>
</svg>
<!--ICONS_END-->
<!--DIALOG_START--><div class="abs" style="left:623px;top:425px;width:309px;height:109.6px;border-radius:8px;background:#f0f0f0;border:1px solid #9d9d9d;box-shadow:0 20px 44px 4px rgba(0,0,0,.27),0 2px 12px rgba(0,0,0,.12)"></div>
<div class="abs" style="left:624px;top:426px;width:307px;height:28px;border-radius:7px 7px 0 0;background:#f3f3f3"></div>
<div class="abs" style="left:633px;top:432px;font-size:12px;line-height:17px;color:#111;white-space:nowrap">打开方式</div>
<svg class="abs" style="left:0;top:0" width="1556" height="967" viewBox="0 0 1556 967" fill="none"><path d="M912.4,435.2 L921.8,444.6 M921.8,435.2 L912.4,444.6" stroke="#222" stroke-width="1.1"/></svg>
<div class="abs" style="left:669px;top:485px;width:73px;height:21px;border-radius:4px;background:#fbfbfb;border:1px solid #0a73cf"></div>
<div class="abs" style="left:671px;top:487px;width:69px;height:17px;border:1px dotted #222"></div>
<div class="abs" style="left:669px;top:489px;width:73px;text-align:center;font-size:12px;line-height:17px;color:#000;letter-spacing:0">打开插件</div>
<div class="abs" style="left:798px;top:485px;width:73px;height:21px;border-radius:4px;background:#fdfdfd;border:1px solid #d0d0d0"></div>
<div class="abs" style="left:798px;top:489px;width:73px;text-align:center;font-size:12px;line-height:17px;color:#000">新建插件</div>
<!--DIALOG_END-->
</body>
</html>
